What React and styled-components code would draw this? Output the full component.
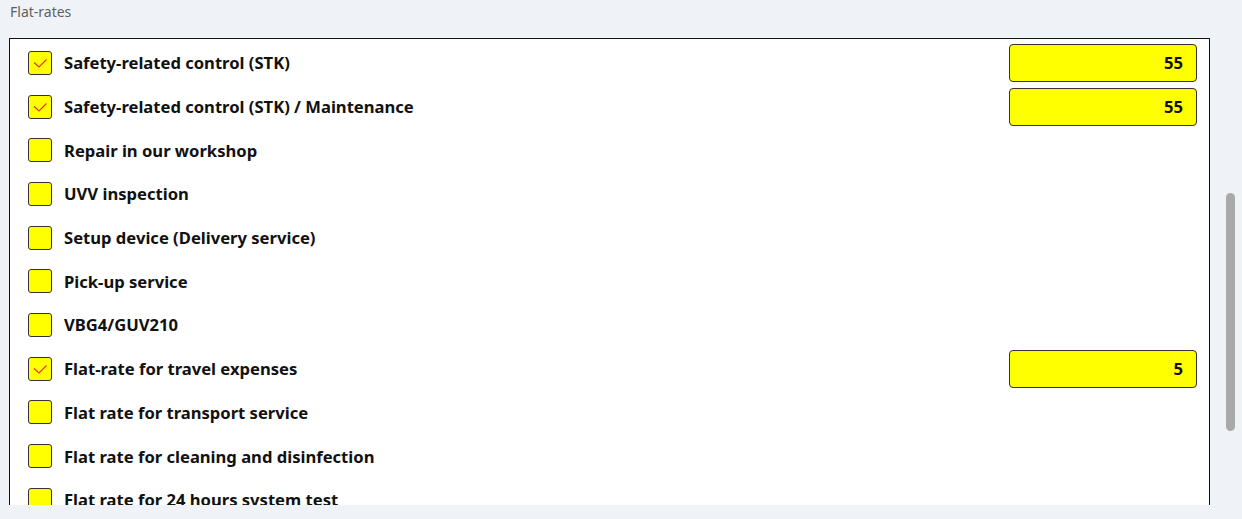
import React from "react";
import styled, { createGlobalStyle } from "styled-components";

const Global = createGlobalStyle`
  html, body { margin: 0; padding: 0; }
  body {
    background: #eff2f7;
    font-family: "Noto Sans", "Open Sans", "Liberation Sans", sans-serif;
    overflow: hidden;
  }
`;

const Page = styled.div`
  width: 1242px;
  height: 519px;
  display: flex;
  flex-direction: column;
  background: #eff2f7;
`;

const Caption = styled.div`
  height: 38px;
  box-sizing: border-box;
  padding: 2px 0 0 10px;
  font-size: 14px;
  color: #5f5f5f;
  line-height: 19px;
`;

const Body = styled.div`
  display: flex;
  height: 467px;
  overflow: hidden;
`;

const Panel = styled.div`
  margin-left: 9px;
  width: 1201px;
  box-sizing: border-box;
  border: 1px solid #111;
  border-bottom: none;
  background: #fff;
  padding: 2px 12px 0 18px;
  height: 520px;
`;

const Row = styled.div`
  height: 43.7px;
  display: flex;
  align-items: center;
  gap: 12px;
`;

const Box = styled.div`
  width: 24px;
  height: 24px;
  box-sizing: border-box;
  border: 1px solid #333;
  border-radius: 3px;
  background: #ffff00;
  flex: none;
  display: flex;
`;

const Label = styled.div`
  flex: 1;
  font-size: 16.6px;
  font-weight: 700;
  color: #111;
  white-space: nowrap;
`;

const Amount = styled.div`
  width: 188px;
  height: 38px;
  box-sizing: border-box;
  border: 1px solid #333;
  border-radius: 4px;
  background: #ffff00;
  display: flex;
  align-items: center;
  justify-content: flex-end;
  padding-right: 13px;
  font-size: 16.6px;
  font-weight: 700;
  color: #111;
`;

const Track = styled.div`
  flex: 1;
  padding-left: 16px;
`;

const Thumb = styled.div`
  margin-top: 155px;
  width: 9px;
  height: 238px;
  border-radius: 5px;
  background: #a9a9a9;
`;

const Check = () => (
  <svg width="22" height="22" viewBox="0 0 22 22">
    <polyline points="5,10.5 10,15 17.5,7.5" fill="none" stroke="#e0303a" strokeWidth="1.1" />
  </svg>
);

const items = [
  { label: "Safety-related control (STK)", checked: true, value: "55" },
  { label: "Safety-related control (STK) / Maintenance", checked: true, value: "55" },
  { label: "Repair in our workshop" },
  { label: "UVV inspection" },
  { label: "Setup device (Delivery service)" },
  { label: "Pick-up service" },
  { label: "VBG4/GUV210" },
  { label: "Flat-rate for travel expenses", checked: true, value: "5" },
  { label: "Flat rate for transport service" },
  { label: "Flat rate for cleaning and disinfection" },
  { label: "Flat rate for 24 hours system test" },
];

export default function App() {
  return (
    <Page>
      <Global />
      <Caption>Flat-rates</Caption>
      <Body>
        <Panel>
          {items.map((it) => (
            <Row key={it.label}>
              <Box>{it.checked && <Check />}</Box>
              <Label>{it.label}</Label>
              {it.value && <Amount>{it.value}</Amount>}
            </Row>
          ))}
        </Panel>
        <Track>
          <Thumb />
        </Track>
      </Body>
    </Page>
  );
}
